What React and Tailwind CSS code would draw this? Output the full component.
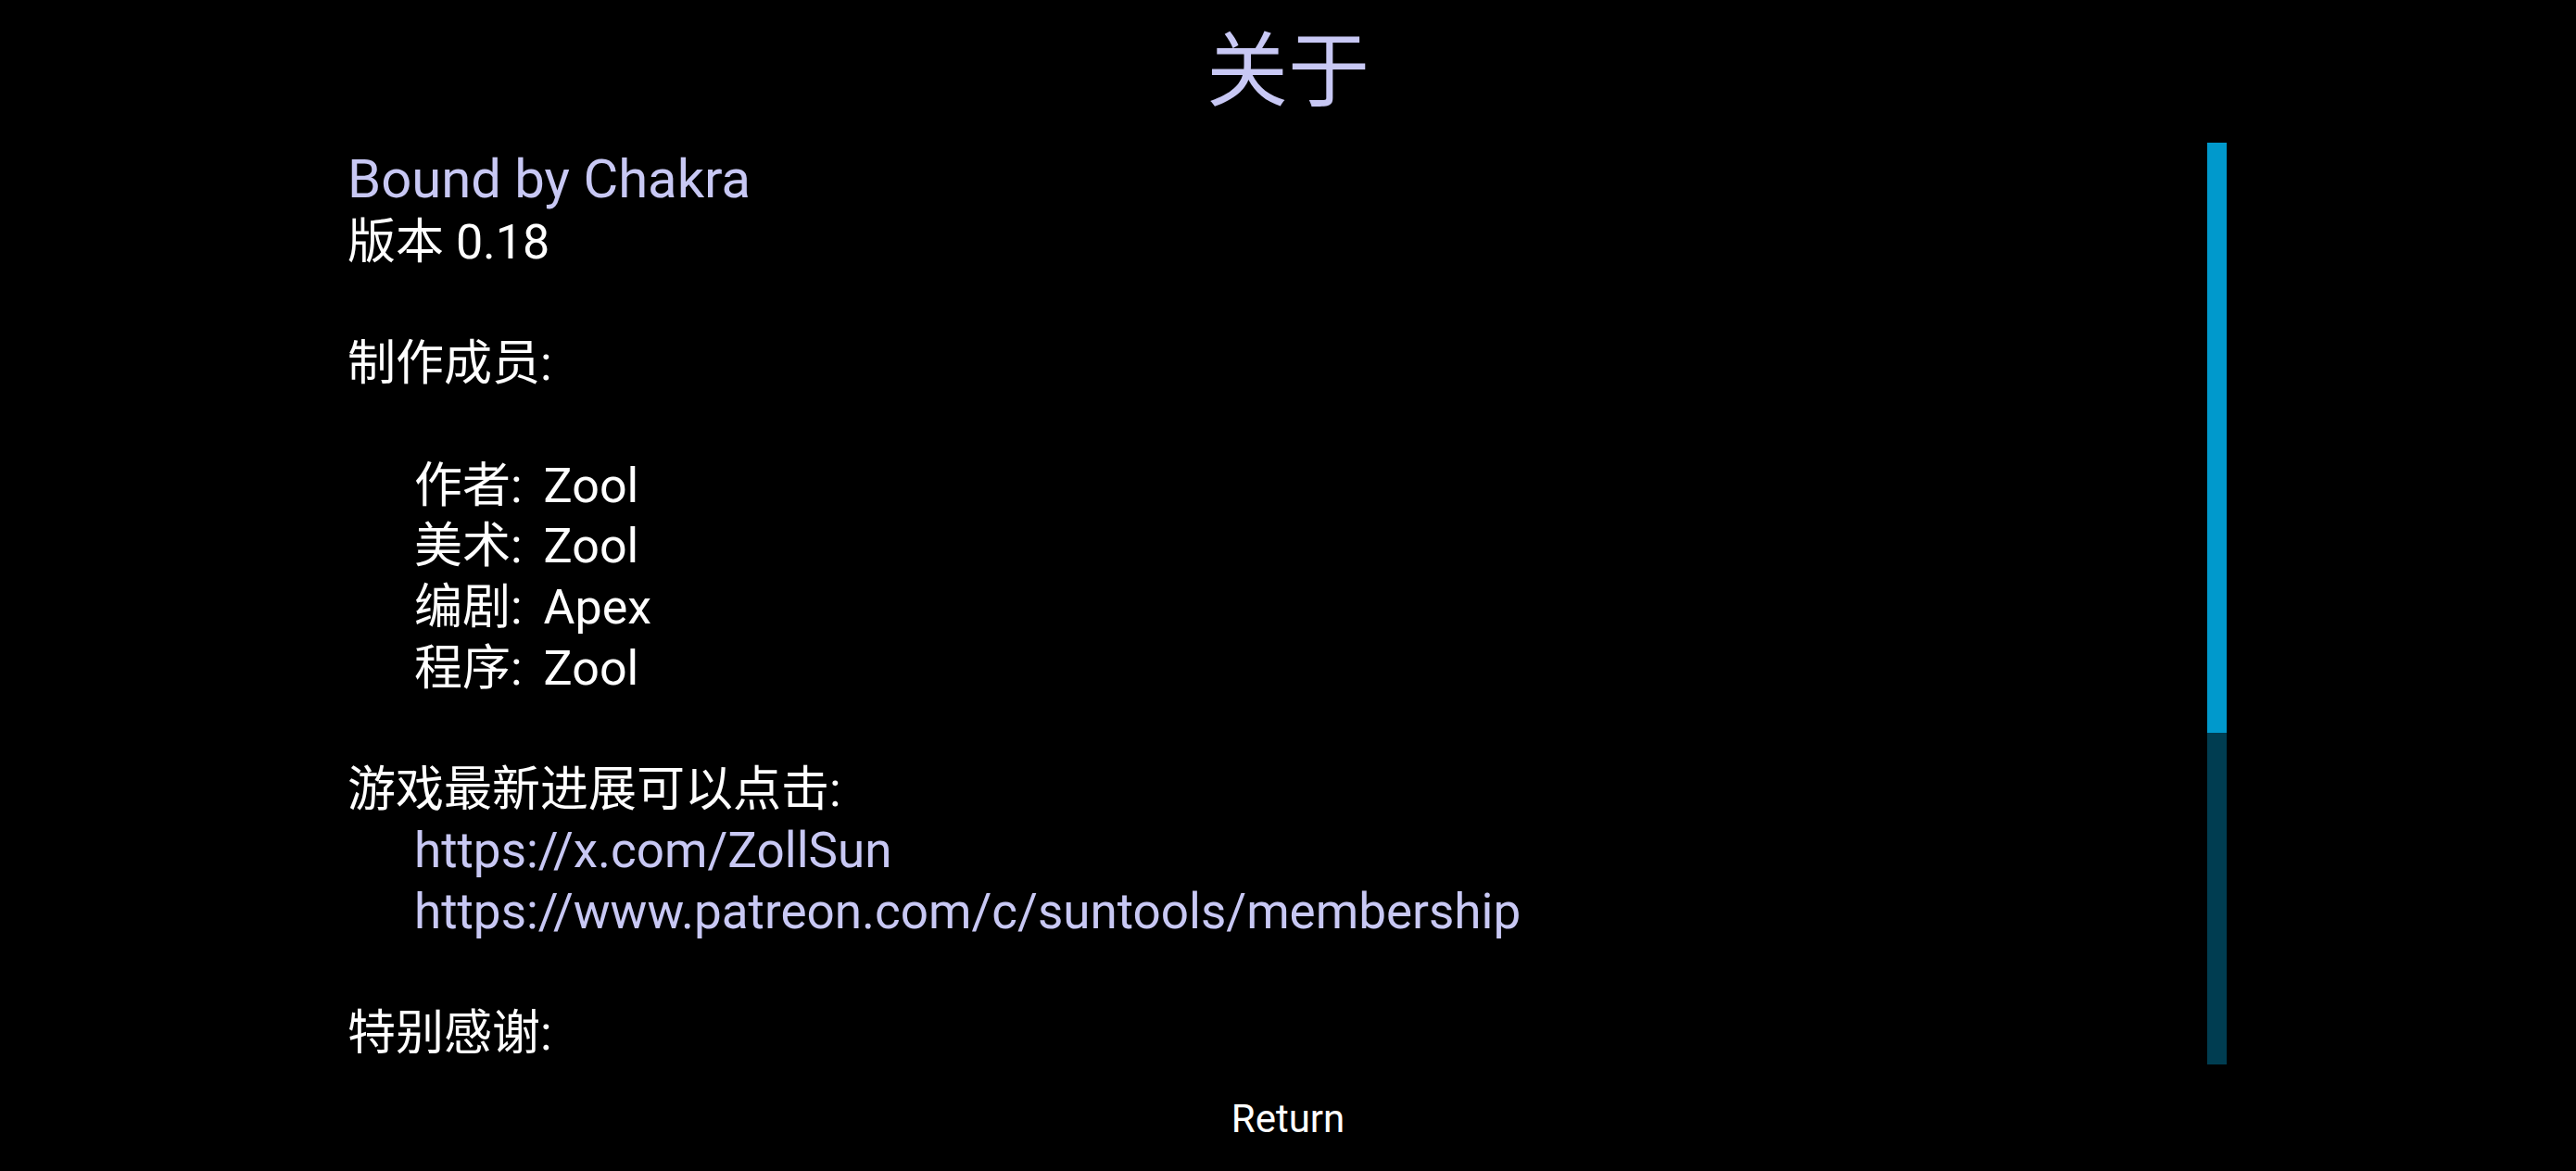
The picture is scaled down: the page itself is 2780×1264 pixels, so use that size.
export default function App() {
  const rows = [
    ["作者:", "Zool"],
    ["美术:", "Zool"],
    ["编剧:", "Apex"],
    ["程序:", "Zool"],
  ];
  return (
    <div className="w-[2780px] h-[1264px] bg-black text-white flex flex-col overflow-hidden font-[family-name:Roboto,'Noto_Sans_CJK_SC',sans-serif]">
      <div className="h-[154px] shrink-0 flex justify-center pt-[25px]">
        <span className="text-[88px] leading-[88px] text-[#c8c8f4] font-[family-name:'Noto_Sans_CJK_SC',sans-serif]">
          关于
        </span>
      </div>
      <div className="h-[995px] shrink-0 flex">
        <div className="flex-1 pl-[375px] pt-[3px] overflow-hidden text-[52px] leading-[65.7px]">
          <div className="text-[58px] leading-[72px] text-[#c8c8f4]">Bound by Chakra</div>
          <div>版本 0.18</div>
          <div className="h-[65.7px]" />
          <div>制作成员:</div>
          <div className="h-[65.7px]" />
          <div className="pl-[72px]">
            {rows.map(([k, v]) => (
              <div key={k} className="flex">
                <span>{k}</span>
                <span className="ml-[23px]">{v}</span>
              </div>
            ))}
          </div>
          <div className="h-[65.7px]" />
          <div>游戏最新进展可以点击:</div>
          <div className="pl-[72px] text-[53px] text-[#c8c8f4]">
            <div>https://x.com/ZollSun</div>
            <div>https://www.patreon.com/c/suntools/membership</div>
          </div>
          <div className="h-[65.7px]" />
          <div>特别感谢:</div>
          <div className="h-[65.7px]" />
          <div className="pl-[72px]">
            <div>&nbsp;</div>
          </div>
        </div>
        <div className="w-[21px] mr-[377px] flex flex-col shrink-0">
          <div className="h-[637px] bg-[#0099cc]" />
          <div className="flex-1 bg-[#003d51]" />
        </div>
      </div>
      <div className="flex-1 flex justify-center pt-[34px]">
        <span className="text-[42px] leading-[50px] text-white">Return</span>
      </div>
    </div>
  );
}
